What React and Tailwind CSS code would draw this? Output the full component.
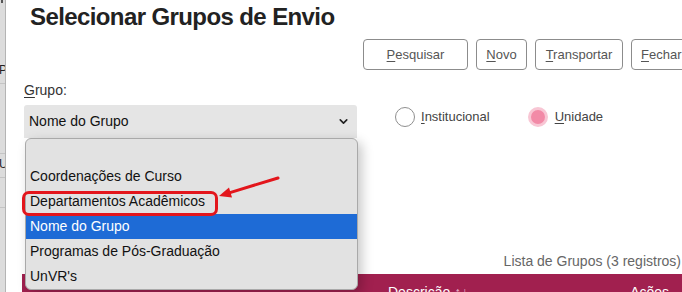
import { ChevronDown } from 'lucide-react'

const options = [
  '',
  'Coordenações de Curso',
  'Departamentos Acadêmicos',
  'Nome do Grupo',
  'Programas de Pós-Graduação',
  "UnVR's",
]

function Btn({ first, rest, w, left }) {
  return (
    <button
      className={`h-[31px] ${w} shrink-0 rounded-[4px] border border-[#8c8c8c] bg-white text-[13px] text-[#555] leading-none ${
        left ? 'text-left pl-[9px]' : ''
      }`}
    >
      <span className="underline underline-offset-2">{first}</span>
      {rest}
    </button>
  )
}

function Radio({ label, checked, gap }) {
  return (
    <label className={`flex items-center ${gap} h-[20px]`}>
      {checked ? (
        <span className="h-[20px] w-[20px] rounded-full border-[3px] border-[#f8c6d4] bg-[#f28aa7]" />
      ) : (
        <span className="h-[20px] w-[20px] rounded-full border border-[#8f8f8f] bg-white" />
      )}
      <span className="text-[13px] text-[#444]">
        <span className="underline underline-offset-2">{label[0]}</span>
        {label.slice(1)}
      </span>
    </label>
  )
}

export default function App() {
  return (
    <div className="relative w-[682px] h-[292px] overflow-hidden bg-white flex font-['Liberation_Sans',Arial,sans-serif]">
      {/* left strip of the page behind */}
      <div className="w-[6px] shrink-0 bg-[#dcdcdc] border-r border-[#b4b4b4] flex flex-col text-[12px] leading-none text-[#222] overflow-hidden">
        <div className="h-[3px] w-[2px] ml-[1px] bg-[#555]" />
        <div className="h-[61px]" />
        <div className="h-[20px] border-b border-[#c4c4c4] -ml-[1px]">P</div>
        <div className="h-[70px] border-b border-[#c4c4c4]" />
        <div className="h-[4px]" />
        <div className="h-[20px] border-b border-[#c4c4c4] -ml-[1px]">U</div>
        <div className="h-[30px] border-b border-[#c4c4c4]" />
      </div>

      <div className="flex-1 min-w-0 overflow-hidden flex flex-col pl-[18px]">
        <h1 className="pt-[5px] pl-[6px] text-[24px] leading-[24px] font-bold tracking-[-0.6px] text-[#222] whitespace-nowrap">
          Selecionar Grupos de Envio
        </h1>

        <div className="mt-[10px] pl-[339px] flex gap-[8px]">
          <Btn first="P" rest="esquisar" w="w-[105px]" />
          <Btn first="N" rest="ovo" w="w-[51px]" />
          <Btn first="T" rest="ransportar" w="w-[88px]" />
          <Btn first="F" rest="echar" w="w-[80px]" left />
        </div>

        <div className="mt-[12px] text-[14px] leading-[16px] text-[#333]">
          <span className="underline underline-offset-2">G</span>rupo:
        </div>

        <div className="mt-[7px] flex items-start">
          <div className="w-[333px] shrink-0 h-[33px] bg-[#e5e5e5] rounded-t-[3px] flex items-center justify-between pl-[5px] pr-[7px] text-[14px] text-[#111]">
            <span>Nome do Grupo</span>
            <ChevronDown size={13} strokeWidth={3} className="text-[#222]" />
          </div>
          <div className="ml-[38px] mt-[2px] flex items-center">
            <Radio label="Institucional" gap="gap-[6px]" />
            <div className="ml-[38px]">
              <Radio label="Unidade" checked gap="gap-[7px]" />
            </div>
          </div>
        </div>

        <div className="mt-[115px] flex justify-end pr-[1px] text-[14px] leading-[16px] text-[#666] whitespace-nowrap">
          Lista de Grupos (3 registros)
        </div>

        <div className="mt-[5px] -ml-[2px] h-[40px] bg-[#a1204f] flex pt-[10px] pl-[366px] text-[14px] leading-[16px] text-white whitespace-nowrap">
          <span>
            Descrição <span className="text-[#e9b3c5]">↑↓</span>
          </span>
          <span className="ml-[162px]">Ações</span>
        </div>
      </div>

      {/* open select list */}
      <div className="absolute left-[25px] top-[138px] w-[333px] bg-[#e2e2e2] border border-[#a9a9a9] rounded-[6px] shadow-[4px_4px_12px_rgba(0,0,0,0.22)] overflow-hidden">
        {options.map((o, i) => (
          <div
            key={i}
            className={`h-[25px] flex items-center pl-[4px] text-[14px] ${
              o === 'Nome do Grupo' ? 'bg-[#1e6bd6] text-white' : 'text-[#111]'
            }`}
          >
            {o}
          </div>
        ))}
      </div>

      {/* annotation */}
      <div className="absolute left-[22px] top-[191px] w-[196px] h-[25px] rounded-[7px] border-[3px] border-[#e3161c]" />
      <svg className="absolute left-0 top-0 pointer-events-none" width="682" height="292">
        <line x1="278" y1="178" x2="230" y2="192.6" stroke="#e3161c" strokeWidth="3" strokeLinecap="round" />
        <polygon points="219,196 232,197.5 229,187.5" fill="#e3161c" />
      </svg>
    </div>
  )
}
